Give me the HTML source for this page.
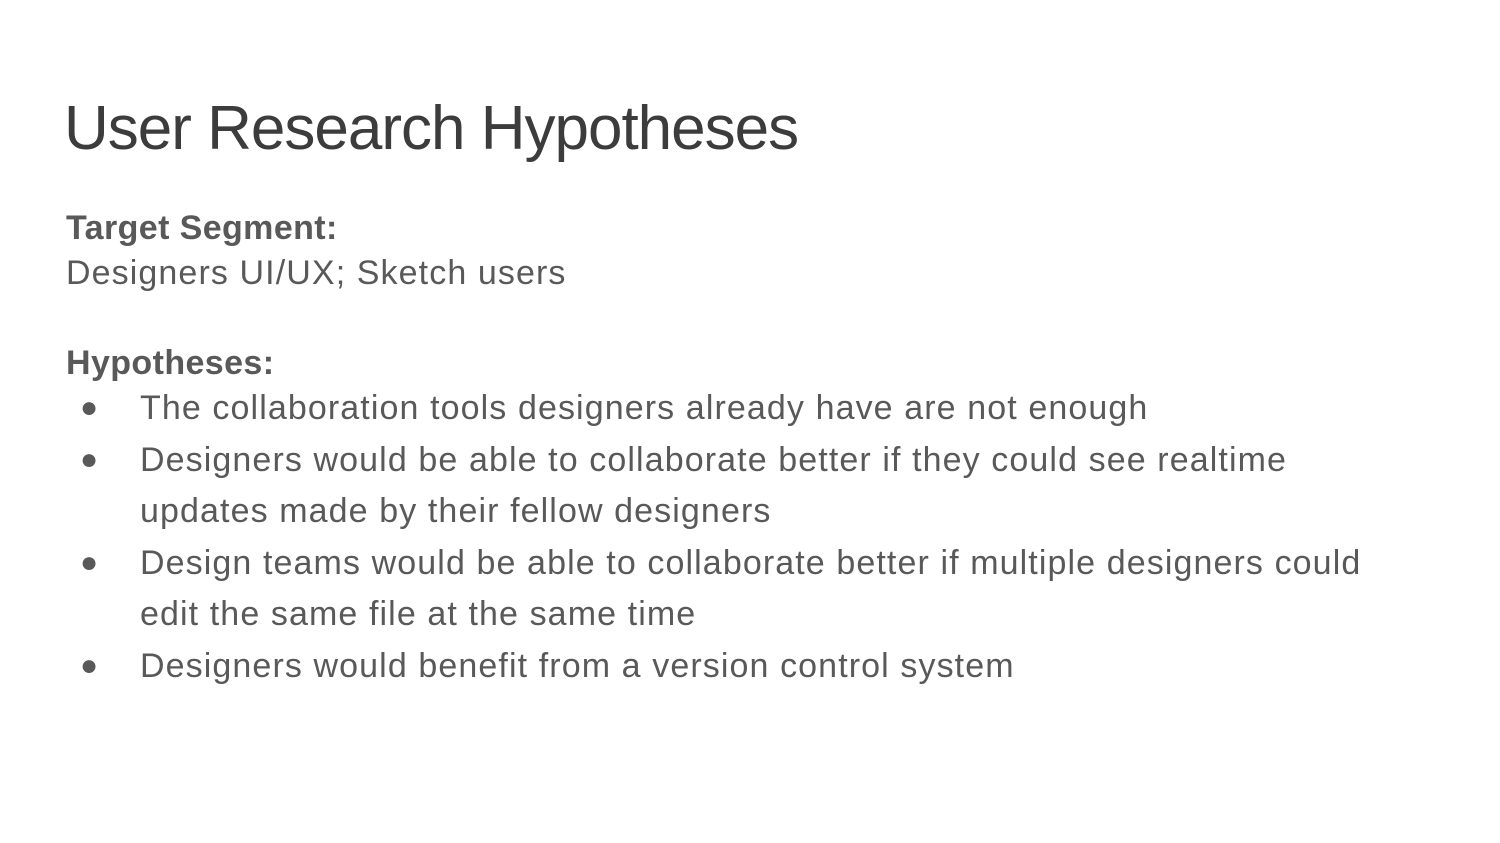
<!DOCTYPE html>
<html><head><meta charset="utf-8"><style>
html,body{margin:0;padding:0;background:#fff;}
body{width:1500px;height:843px;position:relative;overflow:hidden;font-family:"Liberation Sans",sans-serif;color:#595959;}
.l{position:absolute;white-space:nowrap;line-height:1;}
.t{font-size:62px;color:#3c3c3c;left:64px;top:98px;letter-spacing:-1px;}
.b{font-size:34px;letter-spacing:1.1px;}
.bold{font-weight:bold;letter-spacing:0.4px;}
.dot{font-size:30px;left:80px;}
</style></head><body>
<div class="l t">User Research Hypotheses</div>
<div class="l b bold" style="left:66px;top:211px">Target Segment:</div>
<div class="l b" style="left:66px;top:256px">Designers UI/UX; Sketch users</div>
<div class="l b bold" style="left:66px;top:346px">Hypotheses:</div>
<div class="l dot" style="top:393px">●</div>
<div class="l b" style="left:140px;top:391px">The collaboration tools designers already have are not enough</div>
<div class="l dot" style="top:445px">●</div>
<div class="l b" style="left:140px;top:443px">Designers would be able to collaborate better if they could see realtime</div>
<div class="l b" style="left:140px;top:494px">updates made by their fellow designers</div>
<div class="l dot" style="top:548px">●</div>
<div class="l b" style="left:140px;top:546px">Design teams would be able to collaborate better if multiple designers could</div>
<div class="l b" style="left:140px;top:597px">edit the same file at the same time</div>
<div class="l dot" style="top:651px">●</div>
<div class="l b" style="left:140px;top:649px">Designers would benefit from a version control system</div>
</body></html>
